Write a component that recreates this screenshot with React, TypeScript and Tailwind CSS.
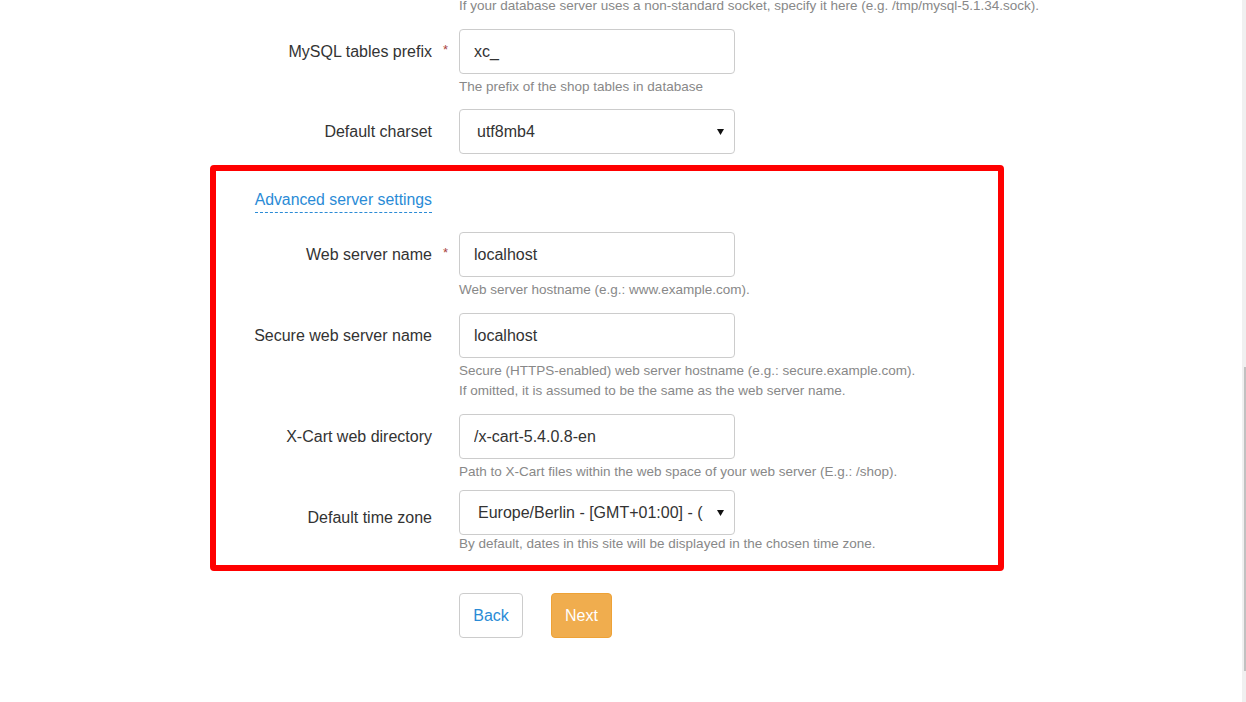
import React from "react";

function Field({ children, select = false }: { children: React.ReactNode; select?: boolean }) {
  return (
    <div
      className={
        "w-[276px] h-[45px] border border-[#cccccc] rounded-[4px] bg-white flex items-center text-[16px] text-[#333] " +
        (select ? "pl-[17px] pr-[10px]" : "pl-[14px]")
      }
    >
      <div className="flex-1 overflow-hidden whitespace-nowrap">{children}</div>
      {select && (
        <svg width="7" height="6" viewBox="0 0 7 6" className="shrink-0">
          <polygon points="0,0 7,0 3.5,6" fill="#111" />
        </svg>
      )}
    </div>
  );
}

function Row({
  label,
  required,
  children,
  className = "",
  labelClass = "",
}: {
  label: string;
  required?: boolean;
  children: React.ReactNode;
  className?: string;
  labelClass?: string;
}) {
  return (
    <div className={"flex " + className}>
      <div
        className={
          "w-[216px] shrink-0 h-[45px] flex items-center justify-end text-[16px] text-[#333] whitespace-nowrap " +
          labelClass
        }
      >
        {label}
      </div>
      <div className="w-[27px] shrink-0 h-[45px] flex items-center justify-center text-[13px] text-[#a94442] pb-[3px]">
        {required ? "*" : ""}
      </div>
      <div className="flex flex-col">{children}</div>
    </div>
  );
}

function Help({ children, className = "" }: { children: React.ReactNode; className?: string }) {
  return (
    <div className={"text-[13.5px] leading-[20px] text-[#888888] whitespace-nowrap " + className}>{children}</div>
  );
}

export default function App() {
  return (
    <div className="flex h-[702px] overflow-hidden bg-white font-['Liberation_Sans',Arial,sans-serif]">
      <div className="flex-1">
        <div className="ml-[210px] w-[794px]">
          <div className="pl-[6px]">
            <div className="flex -mt-[4px]">
              <div className="w-[243px] shrink-0" />
              <Help>
                If your database server uses a non-standard socket, specify it here (e.g. /tmp/mysql-5.1.34.sock).
              </Help>
            </div>
            <Row label="MySQL tables prefix" required className="mt-[13px]">
              <Field>xc_</Field>
              <Help className="mt-[3px]">The prefix of the shop tables in database</Help>
            </Row>
            <Row label="Default charset" className="mt-[12px]">
              <Field select>utf8mb4</Field>
            </Row>
          </div>

          <div className="mt-[11px] border-[6px] border-[#ff0000] rounded-[4px] pt-[18px] pb-[11px]">
            <div className="flex">
              <div className="w-[216px] flex justify-end">
                <span className="text-[15.8px] leading-[22px] pb-[1px] text-[#2a8bd6] border-b border-dashed border-[#2a8bd6] whitespace-nowrap">
                  Advanced server settings
                </span>
              </div>
            </div>
            <Row label="Web server name" required className="mt-[19px]">
              <Field>localhost</Field>
              <Help className="mt-[3px]">Web server hostname (e.g.: www.example.com).</Help>
            </Row>
            <Row label="Secure web server name" className="mt-[13px]">
              <Field>localhost</Field>
              <Help className="mt-[3px]">
                Secure (HTTPS-enabled) web server hostname (e.g.: secure.example.com).
                <br />
                If omitted, it is assumed to be the same as the web server name.
              </Help>
            </Row>
            <Row label="X-Cart web directory" className="mt-[13px]">
              <Field>/x-cart-5.4.0.8-en</Field>
              <Help className="mt-[3px]">Path to X-Cart files within the web space of your web server (E.g.: /shop).</Help>
            </Row>
            <Row label="Default time zone" className="mt-[8px]" labelClass="pt-[10px]">
              <div className="w-[276px] h-[45px] border border-[#cccccc] rounded-[4px] bg-white flex items-center text-[16px] text-[#333] pl-[18px] pr-[10px]">
                <div className="whitespace-nowrap">Europe/Berlin - [GMT+01:00] - (</div>
                <div className="flex-1" />
                <svg width="7" height="6" viewBox="0 0 7 6" className="shrink-0">
                  <polygon points="0,0 7,0 3.5,6" fill="#111" />
                </svg>
              </div>
              <Help className="-mt-[1px]">By default, dates in this site will be displayed in the chosen time zone.</Help>
            </Row>
          </div>

          <div className="mt-[22px] pl-[249px] flex gap-[28px]">
            <div className="w-[64px] h-[45px] border border-[#cccccc] rounded-[4px] bg-white flex items-center justify-center text-[16px] text-[#2a8bd6]">
              Back
            </div>
            <div className="w-[61px] h-[45px] border border-[#eea236] rounded-[4px] bg-[#f0ad4e] flex items-center justify-center text-[16px] text-white">
              Next
            </div>
          </div>
        </div>
      </div>
      <div className="w-[4px] h-full bg-[#f0f0f0] flex justify-end">
        <div className="w-[2px] h-[304px] mt-[367px] bg-[#c1c1c1]" />
      </div>
    </div>
  );
}
